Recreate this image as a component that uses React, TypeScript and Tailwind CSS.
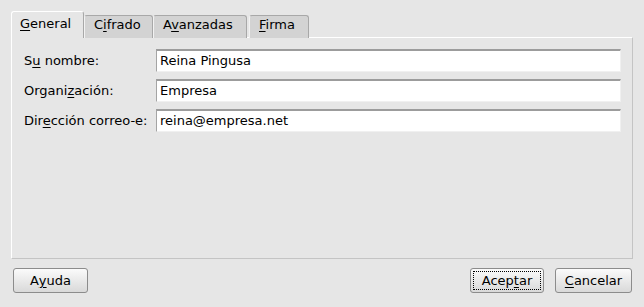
import React from 'react';

const font = { fontFamily: '"DejaVu Sans", "Liberation Sans", sans-serif' };

const Mn: React.FC<{ children: React.ReactNode }> = ({ children }) => (
  <span className="underline underline-offset-2 decoration-1">{children}</span>
);

const tabs = [
  { id: 'general', label: <><Mn>G</Mn>eneral</>, w: 'w-[73px]' },
  { id: 'cifrado', label: <>C<Mn>i</Mn>frado</>, w: 'w-[69px]' },
  { id: 'avanzadas', label: <>A<Mn>v</Mn>anzadas</>, w: 'w-[94px]' },
  { id: 'firma', label: <><Mn>F</Mn>irma</>, w: 'w-[60px]' },
];

const fields = [
  { label: <>S<Mn>u</Mn> nombre:</>, value: 'Reina Pingusa' },
  { label: <>Organi<Mn>z</Mn>ación:</>, value: 'Empresa' },
  { label: <>Dir<Mn>e</Mn>cción correo-e:</>, value: 'reina@empresa.net' },
];

const Button: React.FC<{ children: React.ReactNode; width: string; focused?: boolean }> = ({
  children,
  width,
  focused,
}) => (
  <button
    className={`${width} h-[25px] rounded-[3px] border border-[#8c8c8c] bg-gradient-to-b from-[#fbfbfb] to-[#d9d9d9] text-[13px] text-black p-[3px]`}
  >
    <span
      className={`flex h-full w-full items-center justify-center ${
        focused ? 'outline outline-1 outline-dotted outline-black' : ''
      }`}
    >
      {children}
    </span>
  </button>
);

export default function App() {
  return (
    <div className="w-[644px] h-[307px] bg-[#e6e6e6] text-black text-[13px] px-[11px] pt-[11px]" style={font}>
      {/* Tabs */}
      <div className="flex items-end h-[27px] relative z-10">
        {tabs.map((t, i) =>
          i === 0 ? (
            <div
              key={t.id}
              className={`${t.w} h-[27px] bg-[#e6e6e6] border-l border-t border-white border-r border-r-[#a8a8a8] rounded-t-[3px] pl-[8px] pt-[3px] leading-[17px]`}
            >
              {t.label}
            </div>
          ) : (
            <div
              key={t.id}
              className={`${t.w} h-[23px] bg-[#d3d3d3] border border-b-0 border-[#a8a8a8] border-l-[#f2f2f2] rounded-t-[3px] pl-[9px] pt-0 leading-[17px] ${
                i === 3 ? 'ml-[2px]' : ''
              }`}
            >
              {t.label}
            </div>
          )
        )}
      </div>

      {/* Panel */}
      <div className="-mt-[1px] h-[222px] w-[622px] border border-white border-r-[#c4c4c4] border-b-[#c4c4c4] pl-[12px] pr-[11px] pt-[11px]">
        <div className="grid grid-cols-[132px_1fr] gap-y-[7px] items-center">
          {fields.map((f, i) => (
            <React.Fragment key={i}>
              <div className="leading-none">{f.label}</div>
              <div className="h-[23px] bg-white border border-t-[2px] border-t-[#9c9c9c] border-l-[#a4a4a4] border-r-[#f0f0f0] border-b-[#f0f0f0] pl-[3px] flex items-center">
                {f.value}
              </div>
            </React.Fragment>
          ))}
        </div>
      </div>

      {/* Buttons */}
      <div className="flex items-center mt-[9px] pl-[2px] pr-[1px]">
        <Button width="w-[75px]">
          A<Mn>y</Mn>uda
        </Button>
        <div className="flex-1" />
        <Button width="w-[74px]" focused>
          Acep<Mn>t</Mn>ar
        </Button>
        <div className="w-[11px]" />
        <Button width="w-[77px]">
          <Mn>C</Mn>ancelar
        </Button>
      </div>
    </div>
  );
}
